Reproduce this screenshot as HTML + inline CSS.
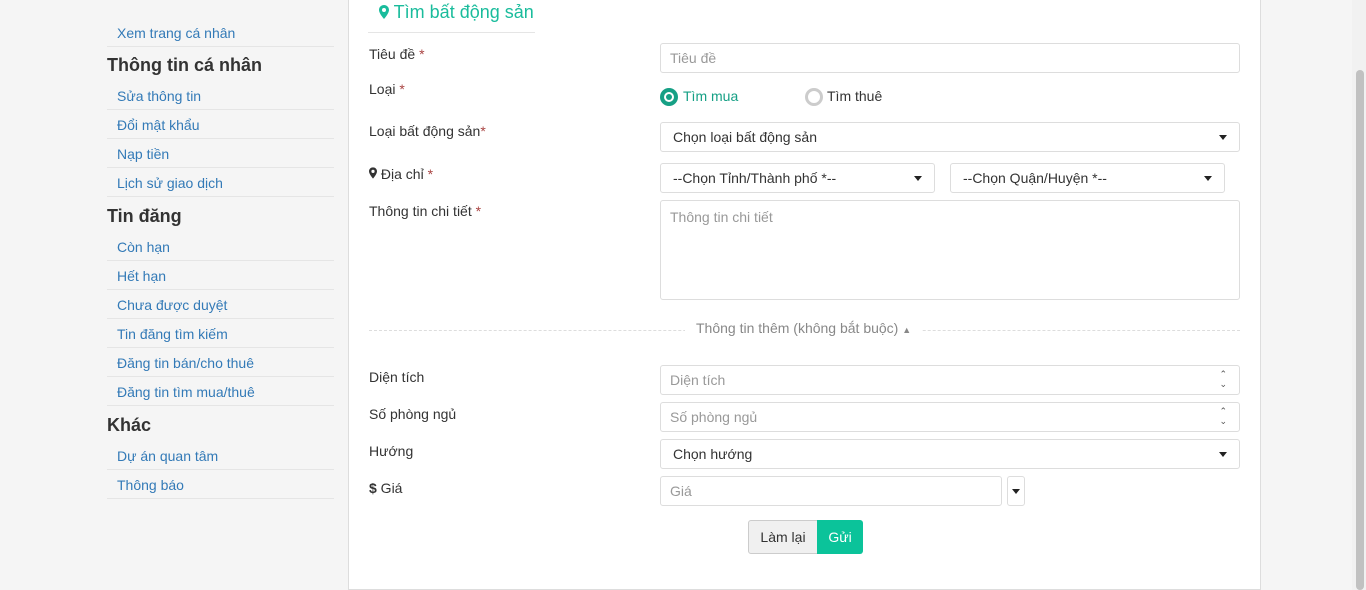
<!DOCTYPE html>
<html><head><meta charset="utf-8"><style>
*{box-sizing:border-box;margin:0;padding:0}
body{width:1366px;height:590px;background:#f5f5f5;font-family:"Liberation Sans",sans-serif;font-size:14px;color:#333;position:relative;overflow:hidden}
.a{position:absolute}
.lk{position:absolute;left:107px;width:227px;height:29px;border-bottom:1px solid #e5e5e5;color:#337ab7;padding-left:10px;line-height:30px;font-size:14px}
.hd{position:absolute;left:107px;font-weight:bold;font-size:18px;color:#333}
.panel{position:absolute;left:348px;top:-1px;width:913px;height:591px;background:#fff;border:1px solid #ddd}
.lb{position:absolute;left:369px;font-size:14px;color:#333}
.req{color:#a94442}
.in{position:absolute;border:1px solid #ddd;border-radius:3px;background:#fff;height:30px;line-height:28px;padding-left:9px;color:#999;font-size:14px}
.sel{color:#333;padding-left:12px}
.car{position:absolute;right:12px;top:12px;width:0;height:0;border-left:4px solid transparent;border-right:4px solid transparent;border-top:5px solid #222}
.spin{position:absolute;right:12px;top:3px;font-size:9px;line-height:10px;color:#555}
</style></head><body>
<a class="lk" style="top:18px">Xem trang cá nhân</a>
<div class="hd" style="top:55px">Thông tin cá nhân</div>
<a class="lk" style="top:81px">Sửa thông tin</a>
<a class="lk" style="top:110px">Đổi mật khẩu</a>
<a class="lk" style="top:139px">Nạp tiền</a>
<a class="lk" style="top:168px">Lịch sử giao dịch</a>
<div class="hd" style="top:206px">Tin đăng</div>
<a class="lk" style="top:232px">Còn hạn</a>
<a class="lk" style="top:261px">Hết hạn</a>
<a class="lk" style="top:290px">Chưa được duyệt</a>
<a class="lk" style="top:319px">Tin đăng tìm kiếm</a>
<a class="lk" style="top:348px">Đăng tin bán/cho thuê</a>
<a class="lk" style="top:377px">Đăng tin tìm mua/thuê</a>
<div class="hd" style="top:415px">Khác</div>
<a class="lk" style="top:441px">Dự án quan tâm</a>
<a class="lk" style="top:470px">Thông báo</a>

<div class="panel"></div>
<div class="a" style="left:379px;top:2px;color:#1abc9c;font-size:18px"><svg width="10" height="14" viewBox="0 0 10 14" style="vertical-align:-1px"><path d="M5 0C2.2 0 0 2.2 0 5c0 3.5 5 9 5 9s5-5.5 5-9C10 2.2 7.8 0 5 0zm0 7a2 2 0 110-4 2 2 0 010 4z" fill="#1abc9c"/></svg> Tìm bất động sản</div>
<div class="a" style="left:368px;top:32px;width:167px;border-top:1px solid #e5e5e5"></div>

<div class="lb" style="top:46px">Tiêu đề <span class="req">*</span></div>
<div class="in" style="left:660px;top:43px;width:580px">Tiêu đề</div>
<div class="lb" style="top:81px">Loại <span class="req">*</span></div>
<div class="a" style="left:660px;top:88px;width:18px;height:18px;border-radius:50%;background:#16a085"><div class="a" style="left:4px;top:4px;width:10px;height:10px;border-radius:50%;background:#fff"><div class="a" style="left:2px;top:2px;width:6px;height:6px;border-radius:50%;background:#16a085"></div></div></div>
<div class="a" style="left:683px;top:88px;color:#16a085">Tìm mua</div>
<div class="a" style="left:805px;top:88px;width:18px;height:18px;border-radius:50%;border:3px solid #ccc"></div>
<div class="a" style="left:827px;top:88px">Tìm thuê</div>
<div class="lb" style="top:123px">Loại bất động sản<span class="req">*</span></div>
<div class="in sel" style="left:660px;top:122px;width:580px">Chọn loại bất động sản<div class="car"></div></div>
<div class="lb" style="top:166px"><svg width="8" height="12" viewBox="0 0 10 14"><path d="M5 0C2.2 0 0 2.2 0 5c0 3.5 5 9 5 9s5-5.5 5-9C10 2.2 7.8 0 5 0zm0 7a2 2 0 110-4 2 2 0 010 4z" fill="#333"/></svg> Địa chỉ <span class="req">*</span></div>
<div class="in sel" style="left:660px;top:163px;width:275px">--Chọn Tỉnh/Thành phố *--<div class="car"></div></div>
<div class="in sel" style="left:950px;top:163px;width:275px">--Chọn Quận/Huyện *--<div class="car"></div></div>
<div class="lb" style="top:203px">Thông tin chi tiết <span class="req">*</span></div>
<div class="in" style="left:660px;top:200px;width:580px;height:100px;line-height:1;padding-top:9px">Thông tin chi tiết</div>

<div class="a" style="left:369px;top:330px;width:871px;border-top:1px dashed #ddd"></div>
<div class="a" style="left:685px;top:320px;background:#fff;padding:0 11px;color:#888">Thông tin thêm (không bắt buộc) <span style="font-size:9px">▲</span></div>

<div class="lb" style="top:369px">Diện tích</div>
<div class="in" style="left:660px;top:365px;width:580px">Diện tích<div class="spin">⌃<br>⌄</div></div>
<div class="lb" style="top:406px">Số phòng ngủ</div>
<div class="in" style="left:660px;top:402px;width:580px">Số phòng ngủ<div class="spin">⌃<br>⌄</div></div>
<div class="lb" style="top:443px">Hướng</div>
<div class="in sel" style="left:660px;top:439px;width:580px">Chọn hướng<div class="car"></div></div>
<div class="lb" style="top:480px"><b>$</b> Giá</div>
<div class="in" style="left:660px;top:476px;width:342px">Giá</div>
<div class="in" style="left:1007px;top:476px;width:18px;padding:0"><div class="car" style="right:4px"></div></div>

<div class="a" style="left:748px;top:520px;width:70px;height:34px;background:#f0f0f0;border:1px solid #ccc;border-radius:3px 0 0 3px;text-align:center;line-height:32px;font-size:14px">Làm lại</div>
<div class="a" style="left:817px;top:520px;width:46px;height:34px;background:#0bc39a;border-radius:0 3px 3px 0;text-align:center;line-height:34px;color:#fff;font-size:14px">Gửi</div>

<div class="a" style="left:1352px;top:0;width:14px;height:590px;background:#f1f1f1"></div>
<div class="a" style="left:1356px;top:70px;width:8px;height:520px;background:#c1c1c1;border-radius:4px"></div>
</body></html>
